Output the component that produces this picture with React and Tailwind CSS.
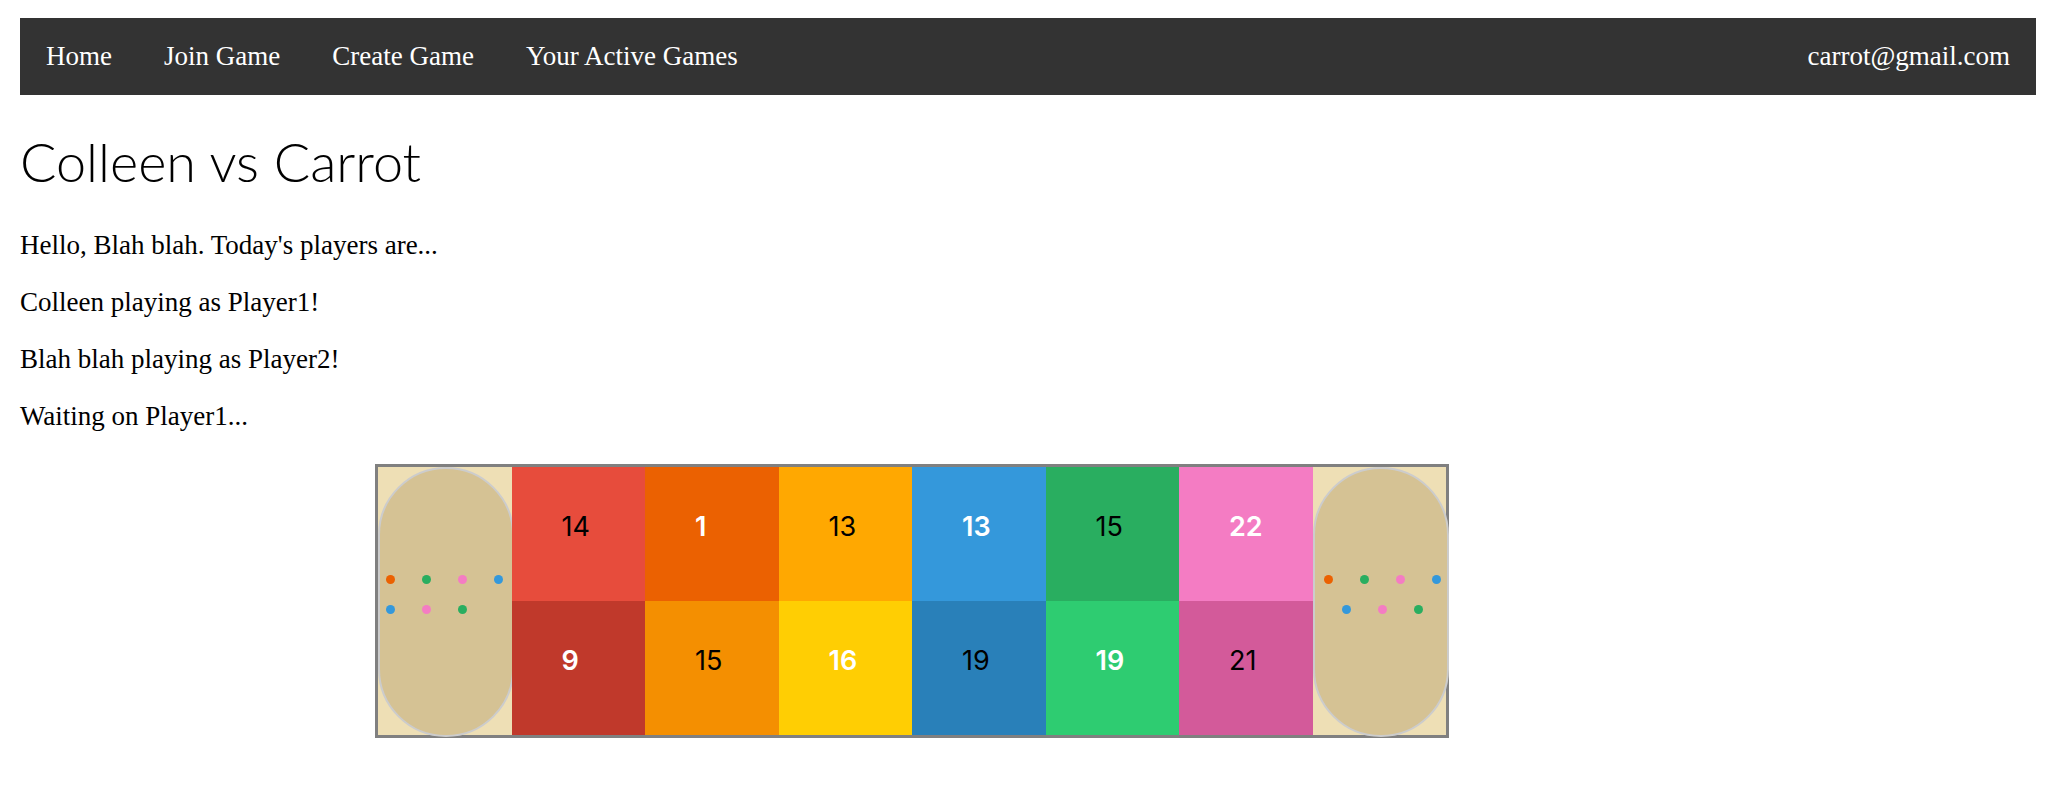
const links = ["Home", "Join Game", "Create Game", "Your Active Games"];

const topRow = [
  { count: 14, tone: "bg-[#e74c3c] text-black" },
  { count: 1, tone: "bg-[#eb6101] text-white font-semibold" },
  { count: 13, tone: "bg-[#ffa801] text-black" },
  { count: 13, tone: "bg-[#3498db] text-white font-semibold" },
  { count: 15, tone: "bg-[#29ae60] text-black" },
  { count: 22, tone: "bg-[#f47cc3] text-white font-semibold" },
];

const bottomRow = [
  { count: 9, tone: "bg-[#c0392b] text-white font-semibold" },
  { count: 15, tone: "bg-[#f48f01] text-black" },
  { count: 16, tone: "bg-[#ffce03] text-white font-semibold" },
  { count: 19, tone: "bg-[#2980b9] text-black" },
  { count: 19, tone: "bg-[#2ecc71] text-white font-semibold" },
  { count: 21, tone: "bg-[#d35a9a] text-black" },
];

const beadRows = [
  ["bg-[#eb6101]", "bg-[#29ae60]", "bg-[#f47cc3]", "bg-[#3498db]"],
  ["bg-[#3498db]", "bg-[#f47cc3]", "bg-[#29ae60]"],
];

function Store({ rowAlign }) {
  return (
    <div className="row-span-2 bg-[#eedfb5]">
      <div className="flex h-[270px] w-[136px] flex-col justify-center gap-[21px] rounded-full border-2 border-[#ccc] bg-[#d5c294] pb-4">
        {beadRows.map((row, i) => (
          <div key={i} className={`flex w-[117px] gap-[27px] ${rowAlign}`}>
            {row.map((color, j) => (
              <span key={j} className={`size-[9px] rounded-full ${color}`} />
            ))}
          </div>
        ))}
      </div>
    </div>
  );
}

function Pit({ count, tone }) {
  return (
    <div className={`relative pt-11 pl-[50px] font-['Inter',sans-serif] text-[27px] leading-8 ${tone}`}>
      {count}
    </div>
  );
}

export default function App() {
  return (
    <div className="pt-[18px] pr-3 pb-10 pl-5 font-['Liberation_Serif',serif] text-[27px] leading-[30px] text-black">
      <nav className="flex flex-wrap justify-between bg-[#333] text-white">
        <ul className="flex flex-wrap">
          {links.map((label) => (
            <li key={label}>
              <a href="#" className="block px-[26px] pt-[23px] pb-6">
                {label}
              </a>
            </li>
          ))}
        </ul>
        <a href="#" className="block px-[26px] pt-[23px] pb-6">
          carrot@gmail.com
        </a>
      </nav>

      <main>
        <h1 className="mt-8 font-['Lato',sans-serif] text-[54px] leading-[70px] font-light">
          Colleen vs Carrot
        </h1>
        <div className="mt-[33px] flex flex-col gap-[27px]">
          <p>Hello, Blah blah. Today's players are...</p>
          <p>Colleen playing as Player1!</p>
          <p>Blah blah playing as Player2!</p>
          <p>Waiting on Player1...</p>
        </div>

        <section
          aria-label="Game board"
          className="mt-[33px] ml-[355px] grid h-[274px] max-w-[1074px] grid-cols-8 grid-rows-2 border-3 border-[#808080]"
        >
          <Store rowAlign="ml-[6px]" />
          {topRow.map((pit, i) => (
            <Pit key={i} {...pit} />
          ))}
          <Store rowAlign="ml-[9px] justify-center" />
          {bottomRow.map((pit, i) => (
            <Pit key={i} {...pit} />
          ))}
        </section>
      </main>
    </div>
  );
}
